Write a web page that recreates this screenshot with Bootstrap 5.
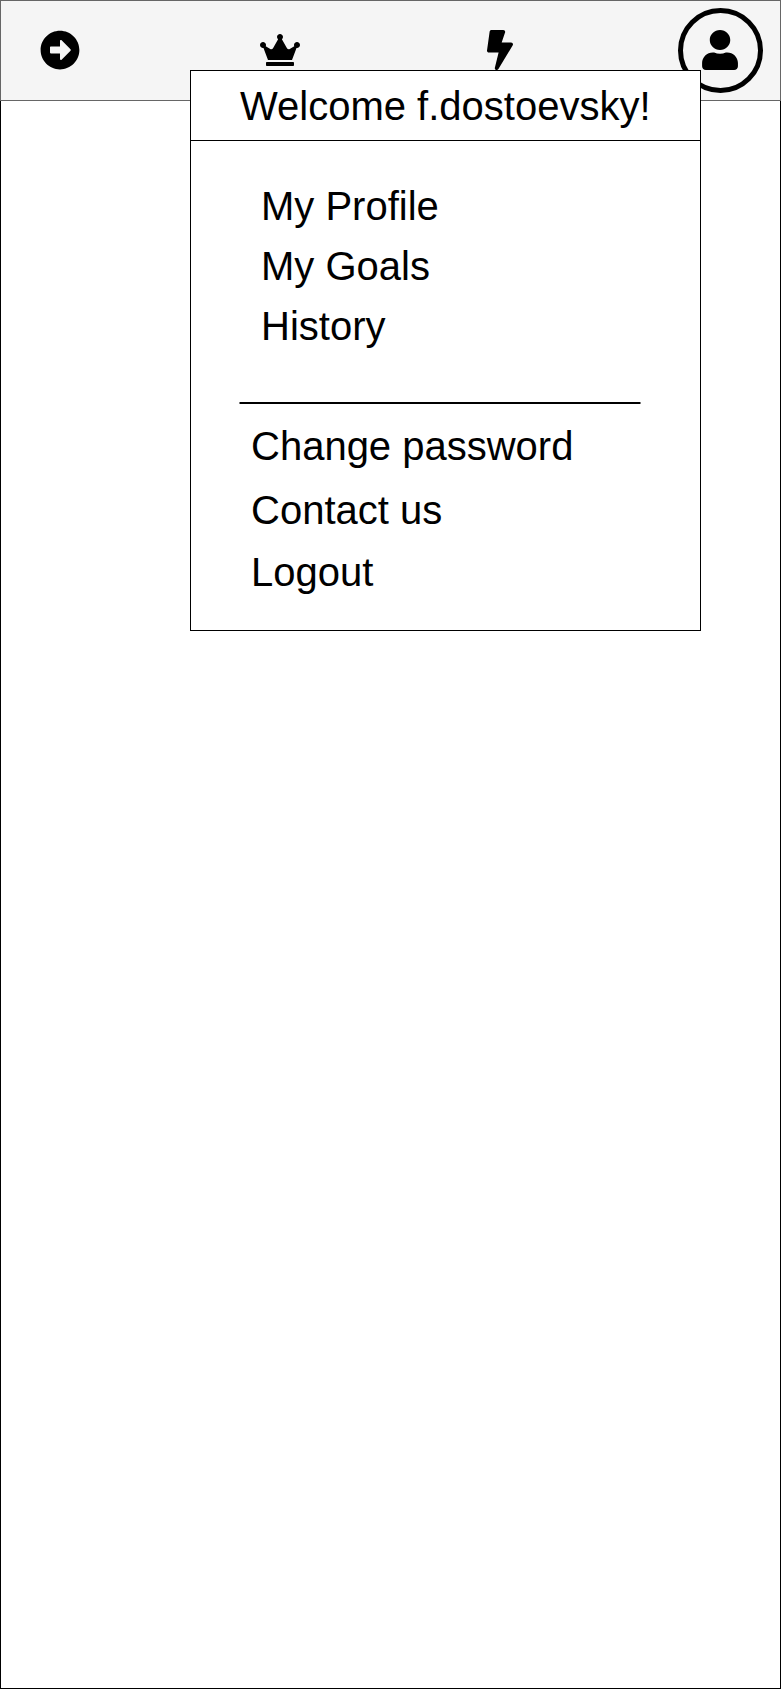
<!DOCTYPE html>
<html lang="en">
<head>
<meta charset="utf-8">
<meta name="viewport" content="width=device-width, initial-scale=1">
<title>Account menu</title>
<link rel="stylesheet" href="https://cdn.jsdelivr.net/npm/bootstrap@5.3.0/dist/css/bootstrap.min.css">
<style>
  body { font-family: "Liberation Sans", Arial, sans-serif; color: #000; background: #fff; }
  .screen { width: 781px; height: 1689px; border: 1px solid #000; }
  .topbar { height: 101px; margin: -1px; padding: 0 17px 2px 16px; background: #f5f5f5; border: 1px solid #666; }
  .slot { width: 86px; height: 98px; color: #000; }
  .account-menu { top: 69px; left: 189px; width: 511px; height: 561px; border: 1px solid #000; font-size: 40px; line-height: 60px; white-space: nowrap; }
  .welcome { height: 70px; padding: 5px 0 0 49px; border-bottom: 1px solid #000; }
  .account-menu a { display: block; height: 60px; color: #000; text-decoration: none; }
  .main-links { padding: 35px 0 0 70px; }
  .rule { display: block; margin: 46px 0 0 48px; }
  .more-links { padding: 12px 0 0 60px; }
  .more-links .contact { margin: 4px 0 2px; }
</style>
</head>
<body>
<div class="screen position-relative">
  <nav class="topbar d-flex justify-content-between align-items-start">
    <a href="#" class="slot d-flex align-items-center justify-content-center" aria-label="Next">
      <svg width="40" height="40" viewBox="0 0 512 512" fill="currentColor"><path d="M256 8c137 0 248 111 248 248S393 504 256 504 8 393 8 256 119 8 256 8zM140 300h116v70.9c0 10.7 13 16.1 20.5 8.5l114.3-114.9c4.7-4.7 4.7-12.2 0-16.9l-114.3-115c-7.6-7.6-20.5-2.2-20.5 8.5V212H140c-6.6 0-12 5.4-12 12v64c0 6.600 5.400 12 12 12z"/></svg>
    </a>
    <a href="#" class="slot d-flex align-items-center justify-content-center" aria-label="Ranking">
      <svg width="40" height="32" viewBox="0 0 640 512" fill="currentColor"><path d="M528 448H112c-8.800 0-16 7.200-16 16v32c0 8.800 7.200 16 16 16h416c8.800 0 16-7.200 16-16v-32c0-8.800-7.200-16-16-16zm64-320c-26.500 0-48 21.500-48 48 0 7.100 1.600 13.700 4.400 19.800L476 239.200c-15.400 9.200-35.300 4-44.200-11.600L350.300 85C361 76.200 368 63 368 48c0-26.500-21.500-48-48-48s-48 21.500-48 48c0 15 7 28.200 17.700 37l-81.500 142.600c-8.900 15.600-28.900 20.800-44.200 11.600l-72.300-43.400c2.700-6 4.400-12.700 4.400-19.800 0-26.500-21.500-48-48-48S0 149.500 0 176s21.500 48 48 48c2.600 0 5.200-.4 7.700-.8L128 416h384l72.300-192.800c2.500.4 5.100.8 7.700.8 26.500 0 48-21.500 48-48s-21.500-48-48-48z"/></svg>
    </a>
    <a href="#" class="slot d-flex align-items-center justify-content-center" aria-label="Activity">
      <svg width="26" height="40" viewBox="0 0 320 512" preserveAspectRatio="none" fill="currentColor"><path d="M296 160H180.600l42.600-129.800C227.200 15 215.700 0 200 0H56C44 0 33.800 8.900 32.200 20.800l-32 240C-1.700 275.200 9.500 288 24 288h118.700L96.600 482.500c-3.600 15.200 8 29.500 23.300 29.500 8.400 0 16.400-4.400 20.800-12l176-304c9.300-15.900-2.200-36-20.700-36z"/></svg>
    </a>
    <a href="#" class="slot d-flex align-items-center justify-content-center" aria-label="Account">
      <svg width="86" height="86" viewBox="0 0 86 86" fill="currentColor"><circle cx="43.5" cy="43.5" r="40" fill="none" stroke="currentColor" stroke-width="5"/><path transform="translate(25.1 23) scale(.08 .078125)" d="M224 256c70.700 0 128-57.300 128-128S294.700 0 224 0 96 57.300 96 128s57.300 128 128 128zm89.600 32h-16.700c-22.200 10.200-46.900 16-72.900 16s-50.600-5.800-72.900-16h-16.700C60.200 288 0 348.200 0 422.400V464c0 26.500 21.500 48 48 48h352c26.500 0 48-21.500 48-48v-41.600c0-74.200-60.200-134.400-134.400-134.400z"/></svg>
    </a>
  </nav>
  <div class="account-menu position-absolute bg-white">
    <div class="welcome">Welcome f.dostoevsky!</div>
    <div class="main-links">
      <a href="#">My Profile</a>
      <a href="#">My Goals</a>
      <a href="#">History</a>
    </div>
    <svg class="rule" width="402" height="2" viewBox="0 0 402 2" aria-hidden="true"><path d="M.5 1h401" stroke="#000" stroke-width="2"/></svg>
    <div class="more-links">
      <a href="#">Change password</a>
      <a href="#" class="contact">Contact us</a>
      <a href="#">Logout</a>
    </div>
  </div>
</div>
<script src="https://cdn.jsdelivr.net/npm/bootstrap@5.3.0/dist/js/bootstrap.bundle.min.js"></script>
</body>
</html>
